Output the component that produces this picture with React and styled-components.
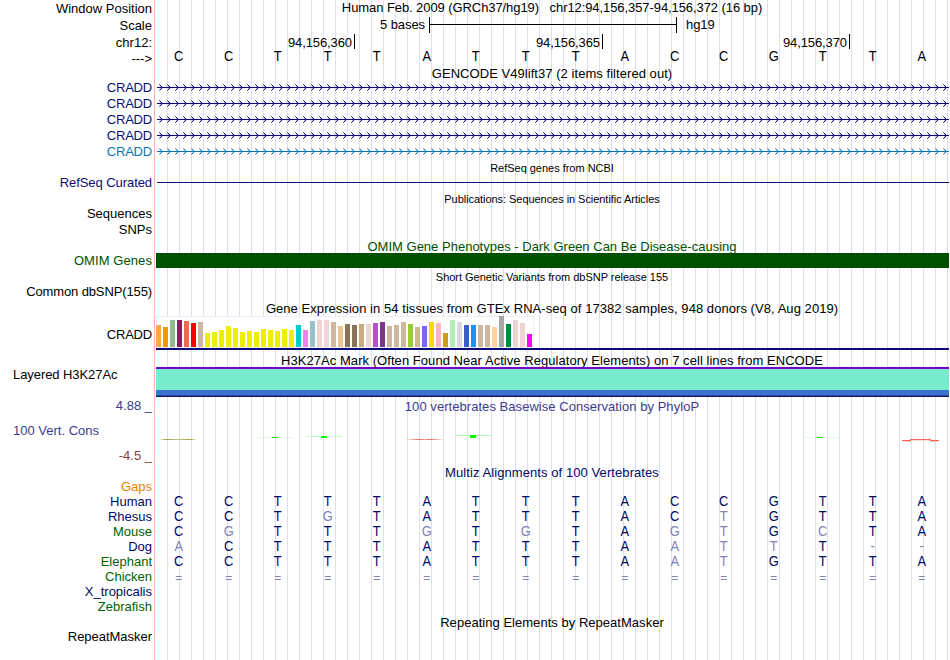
import styled, { createGlobalStyle } from "styled-components";

const GlobalStyle = createGlobalStyle`
  body {
    margin: 0;
    background: #fff;
  }
`;

const Browser = styled.main`
  width: 950px;
  height: 660px;
  overflow: hidden;
  font-family: "Liberation Sans", Arial, sans-serif;
  font-size: 13px;
  line-height: 15px;
  white-space: pre;
  color: #000;
  background:
    linear-gradient(#ffb4b4, #ffb4b4) 154px 0 / 1px 100% no-repeat,
    linear-gradient(to right, #fff 156px, transparent 156px),
    linear-gradient(to right, #dcdcff 1px, transparent 1px) 11px 0 / 12px 100%;
`;

const Row = styled.div`
  display: grid;
  grid-template-columns: 154px 793px;
  column-gap: 2px;
  height: ${(p) => p.$h}px;
`;

const Label = styled.div`
  padding: ${(p) => p.$top || 0}px 2px 0 13px;
  text-align: ${(p) => (p.$left ? "left" : "right")};
  letter-spacing: ${(p) => p.$spacing || 0}px;
  color: ${(p) => p.$color || "#000"};
`;

const Title = styled.div`
  padding: ${(p) => p.$top || 0}px 1px 0 0;
  text-align: center;
  font-size: ${(p) => (p.$small ? 11 : 13)}px;
  line-height: ${(p) => (p.$small ? 12 : 15)}px;
  letter-spacing: ${(p) => p.$spacing || 0}px;
  color: ${(p) => p.$color || "#000"};
`;

const Scale = styled.div`
  display: flex;
  align-items: flex-start;
`;

const ScaleText = styled.span`
  padding-top: 1px;
  width: ${(p) => p.$w}px;
  text-align: right;
  letter-spacing: -0.08px;
`;

const ScaleBar = styled.div`
  box-sizing: border-box;
  width: 248px;
  height: 16px;
  margin: 1px 9px 0 4px;
  border: solid #000;
  border-width: 0 1px;
  background: linear-gradient(#000, #000) 0 7px / 100% 1px no-repeat;
`;

const Ruler = styled.div`
  display: flex;
`;

const Tick = styled.div`
  box-sizing: border-box;
  width: ${(p) => p.$w}px;
  height: 15px;
  padding: 1px 2px 0 0;
  border-right: 1px solid #000;
  text-align: right;
  letter-spacing: -0.1px;
`;

const Bases = styled.div`
  display: grid;
  grid-template-columns: repeat(16, 1fr);
  margin: ${(p) => p.$top || 0}px 2px 0 -2px;
  width: 793px;
  text-align: center;
  font-size: ${(p) => p.$size || 14}px;
  color: ${(p) => p.$color || "#000a64"};
`;

const Base = styled.span`
  color: ${(p) => (p.$faded ? "#8282b4" : "inherit")};
  transform: scaleX(0.92);
`;

const Line = styled.div`
  height: 1px;
  margin: 7px 0 0 1px;
  background: #0c0c78;
`;

const Solid = styled.div`
  height: 15px;
  background: #005000;
`;

const Expression = styled.div`
  border-bottom: 2px solid #0c0c78;
`;

const Tissues = styled.div`
  box-sizing: border-box;
  display: flex;
  align-items: flex-end;
  gap: 2px;
  width: 378px;
  height: 32px;
  padding-bottom: 1px;
  background: #fff;
  box-shadow: inset 0 0 0 1px #f0f0f0;
`;

const Tissue = styled.div`
  width: 5px;
  height: ${(p) => p.$h}px;
  background: ${(p) => p.$color};
`;

const Signal = styled.div`
  height: 30px;
  background: linear-gradient(
    #7800c8 2px,
    #78ebcd 2px 23px,
    #3c73cd 23px 28px,
    #3246aa 28px 29px,
    #14145a 29px
  );
`;

const Limits = styled.div`
  display: flex;
  flex-direction: column;
`;

const blue = "#0c0c78";
const navy = "#000a64";
const green = "#006400";

const genes = [blue, blue, blue, blue, "#0e74b0"];

const tissues = [
  [22, "#ffa54f"], [20, "#ee9a00"], [27, "#8fbc8f"], [27, "#8b1c62"],
  [26, "#ee6a50"], [24, "#ff0000"], [25, "#cdb79e"], [14, "#eeee00"],
  [15, "#eeee00"], [17, "#eeee00"], [21, "#eeee00"], [19, "#eeee00"],
  [15, "#eeee00"], [16, "#eeee00"], [15, "#eeee00"], [18, "#eeee00"],
  [17, "#eeee00"], [16, "#eeee00"], [18, "#eeee00"], [17, "#eeee00"],
  [22, "#00cdcd"], [17, "#ee82ee"], [26, "#9ac0cd"], [27, "#eed5d2"],
  [27, "#eed5d2"], [25, "#cdb79e"], [21, "#eec591"], [23, "#8b7355"],
  [22, "#8b7355"], [23, "#cdaa7d"], [23, "#eed5d2"], [24, "#b452cd"],
  [25, "#7a378b"], [21, "#cdb79e"], [22, "#cdb79e"], [25, "#cdb79e"],
  [23, "#9acd32"], [20, "#cdb79e"], [21, "#7a67ee"], [25, "#ffd700"],
  [24, "#ffb6c1"], [14, "#cd9b1d"], [27, "#b4eeb4"], [25, "#d9d9d9"],
  [22, "#3a5fcd"], [22, "#1e90ff"], [22, "#cdb79e"], [22, "#cdb79e"],
  [20, "#ffd39b"], [31, "#a6a6a6"], [23, "#008b45"], [27, "#eed5d2"],
  [24, "#eed5d2"], [13, "#ff00ff"],
];

// lower case bases differ from the human sequence
const species = [
  ["Human", navy, "CCTTTATTTACCGTTA"],
  ["Rhesus", navy, "CCTgTATTTACtGTTA"],
  ["Mouse", green, "CgTTTgTgTAgtGcTA"],
  ["Dog", navy, "aCTTTATTTAattT--"],
  ["Elephant", green, "CCTTTATTTAatGTTA"],
  ["Chicken", green, "================"],
  ["X_tropicalis", navy, ""],
  ["Zebrafish", green, ""],
];

const Sequence = ({ text, color, top, size }) => (
  <Bases $color={color} $top={top} $size={size}>
    {text.split("").map((b, i) => (
      <Base key={i} $faded={!/[A-Z]/.test(b)}>
        {b.toUpperCase()}
      </Base>
    ))}
  </Bases>
);

const Gene = ({ id, color }) => (
  <svg width="793" height="16" shapeRendering="crispEdges">
    <defs>
      <pattern id={id} x="3" width="8" height="16" patternUnits="userSpaceOnUse">
        <path d="M1 5h1v1h-1zM2 6h1v1h-1zM2 8h1v1h-1zM1 9h1v1h-1z" fill={color} />
        <path d="M0 4h1v1h-1zM0 10h1v1h-1z" fill={color} opacity="0.55" />
        <path d="M0 5h1v1h-1zM1 6h1v1h-1zM1 8h1v1h-1zM0 9h1v1h-1z" fill={color} opacity="0.2" />
      </pattern>
    </defs>
    <rect x="3" width="790" height="16" fill={`url(#${id})`} />
    <rect x="1" y="7" width="792" height="1" fill={color} />
  </svg>
);

const Conservation = () => (
  <svg width="793" height="51">
    <defs>
      <linearGradient id="olive">
        <stop offset="0" stopColor="#b4b450" stopOpacity="0.2" />
        <stop offset="0.15" stopColor="#a0a03c" />
        <stop offset="0.5" stopColor="#c8c88c" />
        <stop offset="0.85" stopColor="#a0a03c" />
        <stop offset="1" stopColor="#b4b450" stopOpacity="0.2" />
      </linearGradient>
      <linearGradient id="red">
        <stop offset="0" stopColor="#f08c8c" stopOpacity="0.2" />
        <stop offset="0.35" stopColor="#e66464" />
        <stop offset="0.5" stopColor="#f0a0a0" />
        <stop offset="0.65" stopColor="#e66464" />
        <stop offset="1" stopColor="#f08c8c" stopOpacity="0.2" />
      </linearGradient>
    </defs>
    <rect x="4" y="25" width="36" height="1" fill="url(#olive)" />
    <rect x="101" y="23" width="36" height="1" fill="#e1fae1" />
    <rect x="116" y="23" width="6" height="1" fill="#1edc1e" />
    <rect x="150" y="22" width="36" height="1" fill="#beffbe" />
    <rect x="165" y="22" width="6" height="2" fill="#00ff00" />
    <rect x="250" y="25" width="37" height="1" fill="url(#red)" />
    <rect x="299" y="21" width="36" height="1" fill="#b4ffb4" />
    <rect x="314" y="21" width="6" height="3" fill="#00ff00" />
    <rect x="646" y="23" width="36" height="1" fill="#e1fae1" />
    <rect x="661" y="23" width="6" height="1" fill="#1edc1e" />
    <rect x="747" y="26" width="36" height="1" fill="#fadcc8" />
    <path d="M746 26.5h9M774 26.5h9M754 25.5h21" stroke="#ff3c3c" opacity="0.8" />
    <path d="M749 27.5h6M775 27.5h6" stroke="#c8a050" opacity="0.5" />
  </svg>
);

const App = () => {
  return (
    <>
      <GlobalStyle />
      <Browser>
        <Row $h={16}>
          <Label $top={1}>Window Position</Label>
          <Title $spacing={-0.08}>{"Human Feb. 2009 (GRCh37/hg19)\u00a0\u00a0 chr12:94,156,357-94,156,372 (16 bp)"}</Title>
        </Row>
        <Row $h={18}>
          <Label $top={2}>Scale</Label>
          <Scale>
            <ScaleText $w={269}>5 bases</ScaleText>
            <ScaleBar />
            <ScaleText>hg19</ScaleText>
          </Scale>
        </Row>
        <Row $h={15}>
          <Label $top={1}>chr12:</Label>
          <Ruler>
            <Tick $w={199}>94,156,360</Tick>
            <Tick $w={248}>94,156,365</Tick>
            <Tick $w={247}>94,156,370</Tick>
          </Ruler>
        </Row>
        <Row $h={17}>
          <Label $top={2}>{"--->"}</Label>
          <Sequence text="CCTTTATTTACCGTTA" color="#000" />
        </Row>
        <Row $h={14}>
          <Label />
          <Title $spacing={0.05}>GENCODE V49lift37 (2 items filtered out)</Title>
        </Row>
        {genes.map((color, i) => (
          <Row $h={16} key={i}>
            <Label $color={color} $spacing={-0.2}>CRADD</Label>
            <Gene id={`exon${i}`} color={color} />
          </Row>
        ))}
        <Row $h={15}>
          <Label />
          <Title $small $top={2} $spacing={-0.02}>RefSeq genes from NCBI</Title>
        </Row>
        <Row $h={16}>
          <Label $color={blue} $spacing={-0.07}>RefSeq Curated</Label>
          <Line />
        </Row>
        <Row $h={15}>
          <Label />
          <Title $small $top={2} $spacing={-0.05}>Publications: Sequences in Scientific Articles</Title>
        </Row>
        <Row $h={16}>
          <Label>Sequences</Label>
        </Row>
        <Row $h={16}>
          <Label>SNPs</Label>
        </Row>
        <Row $h={15}>
          <Label />
          <Title $top={1} $spacing={0.01} $color="#005000">OMIM Gene Phenotypes - Dark Green Can Be Disease-causing</Title>
        </Row>
        <Row $h={16}>
          <Label $color="#005000" $spacing={0.08}>OMIM Genes</Label>
          <Solid />
        </Row>
        <Row $h={15}>
          <Label />
          <Title $small $top={2} $spacing={-0.02}>Short Genetic Variants from dbSNP release 155</Title>
        </Row>
        <Row $h={16}>
          <Label $spacing={-0.12}>Common dbSNP(155)</Label>
        </Row>
        <Row $h={16}>
          <Label />
          <Title $top={1} $spacing={0.055}>Gene Expression in 54 tissues from GTEx RNA-seq of 17382 samples, 948 donors (V8, Aug 2019)</Title>
        </Row>
        <Row $h={34}>
          <Label $top={11} $spacing={-0.2}>CRADD</Label>
          <Expression>
            <Tissues>
              {tissues.map(([h, color], i) => (
                <Tissue key={i} $h={h} $color={color} />
              ))}
            </Tissues>
          </Expression>
        </Row>
        <Row $h={17}>
          <Label />
          <Title $top={3} $spacing={0.05}>H3K27Ac Mark (Often Found Near Active Regulatory Elements) on 7 cell lines from ENCODE</Title>
        </Row>
        <Row $h={30}>
          <Label $left $spacing={-0.07}>Layered H3K27Ac</Label>
          <Signal />
        </Row>
        <Row $h={17}>
          <Label $top={1} $color="#3c3c8c">4.88 _</Label>
          <Title $top={2} $spacing={0.05} $color="#3c3c8c">100 vertebrates Basewise Conservation by PhyloP</Title>
        </Row>
        <Row $h={51}>
          <Limits>
            <Label $left $top={9} $color="#3c3c8c">100 Vert. Cons</Label>
            <Label $top={10} $color="#8c3c3c">-4.5 _</Label>
          </Limits>
          <Conservation />
        </Row>
        <Row $h={14}>
          <Label />
          <Title $spacing={0.08} $color={navy}>Multiz Alignments of 100 Vertebrates</Title>
        </Row>
        <Row $h={15}>
          <Label $color="#e68200">Gaps</Label>
        </Row>
        {species.map(([name, color, text]) => (
          <Row $h={15} key={name}>
            <Label $color={color}>{name}</Label>
            {name === "Chicken" ? <Sequence text={text} top={1} size={13} /> : <Sequence text={text} />}
          </Row>
        ))}
        <Row $h={15}>
          <Label />
          <Title $top={1} $spacing={0.03}>Repeating Elements by RepeatMasker</Title>
        </Row>
        <Row $h={16}>
          <Label $spacing={-0.03}>RepeatMasker</Label>
        </Row>
      </Browser>
    </>
  );
};

export default App;
